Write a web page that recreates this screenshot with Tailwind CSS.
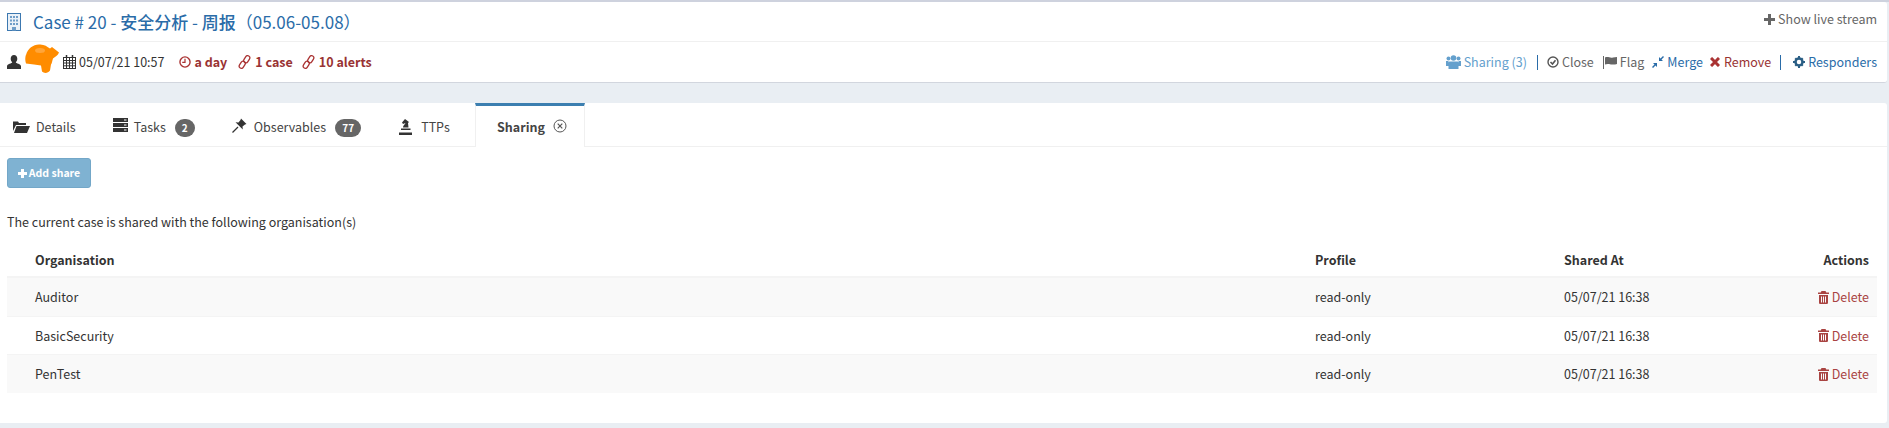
<!DOCTYPE html>
<html lang="zh">
<head>
<meta charset="utf-8">
<script src="https://cdn.jsdelivr.net/npm/@tailwindcss/browser@4"></script>
</head>
<body class="m-0 h-[428px] w-[1889px] overflow-hidden bg-[#e9eef3] font-['Noto_Sans_CJK_SC','Noto_Sans',sans-serif] text-[12.5px] leading-[20px] text-[#333]">
<div class="h-[2px] bg-[#ced2de]"></div>
<div class="w-[1887px] h-[81px] bg-white rounded-r-[3px] border-b border-[#d2d6de]">
  <div class="h-[40px] border-b border-[#f0f0f0] flex items-start justify-between pl-[7px] pr-[10px]">
    <div class="flex items-center h-[39px] text-[#2a6ca8]">
      <svg class="w-[14px] h-[18px] mr-[12px]" viewBox="0 0 14 18" fill="none"><rect x=".5" y=".5" width="13" height="17" stroke="#3c78b0" fill="#eaf1f8"/><path d="M3 3h2v2H3zM6 3h2v2H6zM9 3h2v2H9zM3 6.500h2v2H3zM6 6.500h2v2H6zM9 6.500h2v2H9zM3 10h2v2H3zM6 10h2v2H6zM9 10h2v2H9zM5 14h4v3.500H5z" fill="#6f9dc8"/></svg>
      <span class="text-[17px] leading-[24px]">Case # 20 - <span class="font-medium">安全分析</span> - <span class="font-medium">周报</span>（05.06-05.08）</span>
    </div>
    <div class="flex items-center gap-[3px] mt-[7px] text-[#666]">
      <svg class="w-[11px] h-[11px]" viewBox="0 0 11 11"><path d="M4 0h3v4h4v3H7v4H4V7H0V4h4z" fill="#666"/></svg>
      <span>Show live stream</span>
    </div>
  </div>
  <div class="h-[40px] flex items-center justify-between pl-[7px] pr-[10px]">
    <div class="flex items-center">
      <svg class="w-[14px] h-[14px]" viewBox="0 0 14 14"><path d="M7 0c2 0 3.300 1.600 3.300 3.800 0 1.400-.6 2.700-1.500 3.500 0 1.200 5.200 1.500 5.200 4V14H0v-2.700c0-2.500 5.200-2.800 5.200-4C4.300 6.500 3.700 5.200 3.700 3.800 3.700 1.600 5 0 7 0z" fill="#333"/></svg>
      <div class="relative w-[42px] h-[14px]">
        <svg class="absolute left-[4px] top-[-11px] w-[34px] h-[30px]" viewBox="0 0 34 30"><path d="M1 11C3 4 8 1 14 .5c5-.5 8 2 11 4l2-1.500 7 5.500c-1 3-4 4-6 6-1 3-1 5-2 6l-1 6c-2 3-6 3-8 1l-1-6-7-1-8-1c-1-3-1-6 0-9z" fill="#ff8c00"/><ellipse cx="15" cy="6.500" rx="5" ry="2.500" fill="#ffa53a"/></svg>
      </div>
      <svg class="w-[13px] h-[14px] mr-[3px]" viewBox="0 0 13 14" fill="none" stroke="#333"><rect x=".5" y="2.500" width="12" height="11"/><path d="M.5 5.500h12M.5 8h12M.5 10.800h12M3.500 3v10.500M6.500 3v10.500M9.500 3v10.500"/><path d="M3.500 0v3M9.500 0v3" stroke-width="1.500"/></svg>
      <span>05/07/21 10:57</span>
      <span class="flex items-center font-bold text-[#993333] ml-[15px]">
        <svg class="w-[12px] h-[12px] mr-[3px]" viewBox="0 0 13 13" fill="none" stroke="#a33"><circle cx="6.500" cy="6.500" r="5.500" stroke-width="1.500"/><path d="M6.500 3v4H3.500" stroke-width="1.300"/></svg>a day</span>
      <span class="flex items-center font-bold text-[#993333] ml-[11px]">
        <svg class="w-[13px] h-[14px] mr-[4px]" viewBox="0 0 13 14" fill="none" stroke="#a33" stroke-width="1.300"><rect x="2" y="6" width="4.500" height="7.500" rx="2.250" transform="rotate(32 4.250 9.750)"/><rect x="6.500" y=".5" width="4.500" height="7.500" rx="2.250" transform="rotate(32 8.750 4.250)"/></svg>1 case</span>
      <span class="flex items-center font-bold text-[#993333] ml-[9px]">
        <svg class="w-[13px] h-[14px] mr-[4px]" viewBox="0 0 13 14" fill="none" stroke="#a33" stroke-width="1.300"><rect x="2" y="6" width="4.500" height="7.500" rx="2.250" transform="rotate(32 4.250 9.750)"/><rect x="6.500" y=".5" width="4.500" height="7.500" rx="2.250" transform="rotate(32 8.750 4.250)"/></svg>10 alerts</span>
    </div>
    <div class="flex items-center">
      <span class="flex items-center text-[#64a0cd]">
        <svg class="w-[15px] h-[14px] mr-[3px]" viewBox="0 0 15 14" fill="#64a0cd"><circle cx="7.500" cy="3" r="2.800"/><circle cx="2.500" cy="3.500" r="2"/><circle cx="12.500" cy="3.500" r="2"/><path d="M4 6.500h7c1 0 1.500.5 1.500 1.500v6h-10V8c0-1 .5-1.500 1.500-1.500zM0 6h2.500v5H0zM12.500 6H15v5h-2.500z"/></svg>Sharing (3)</span>
      <span class="w-px h-[15px] bg-[#2a6ca8] ml-[10px] mr-[9px]"></span>
      <span class="flex items-center text-[#666]">
        <svg class="w-[12px] h-[12px] mr-[3px]" viewBox="0 0 12 12" fill="none" stroke="#555" stroke-width="1.400"><circle cx="6" cy="6" r="5"/><path d="M3.500 6 5.500 8 8.500 4.200" stroke-width="1.600"/></svg>Close</span>
      <span class="flex items-center text-[#666] ml-[9px]">
        <svg class="w-[14px] h-[13px] mr-[3px]" viewBox="0 0 14 13" fill="#666"><path d="M0 0h1v13H0zM2 1.500c3-1.500 5 1 8 0l4-.5v7c-3 1-6 .5-8 0-1.500-.3-3 0-4 .5z"/></svg>Flag</span>
      <span class="flex items-center text-[#2a6ca8] ml-[8px]">
        <svg class="w-[12px] h-[12px] mr-[3px]" viewBox="0 0 12 12" fill="#2a6ca8"><path d="M11 0l1 1-2.500 2.500L11 5H7V1l1.500 1.500zM1 12l-1-1 2.500-2.500L1 7h4v4L3.500 9.500z"/></svg>Merge</span>
      <span class="flex items-center text-[#993333] ml-[7px]">
        <svg class="w-[10px] h-[10px] mr-[4px]" viewBox="0 0 10 10" fill="none" stroke="#a33" stroke-width="3"><path d="M1 1l8 8M9 1l-8 8"/></svg>Remove</span>
      <span class="w-px h-[15px] bg-[#2a6ca8] ml-[9px] mr-[12px]"></span>
      <span class="flex items-center text-[#2a6ca8]">
        <svg class="w-[12px] h-[12px] mr-[3px]" viewBox="0 0 12 12"><circle cx="6" cy="6" r="3.500" fill="none" stroke="#2b5f85" stroke-width="2.500"/><path d="M5 0h2v2.500H5zM5 9.500h2V12H5zM0 5h2.500v2H0zM9.500 5H12v2H9.500zM1.500 3 3 1.500 4.500 3 3 4.500zM7.500 9 9 7.500 10.500 9 9 10.500zM7.500 3 9 1.500 10.500 3 9 4.500zM1.500 9 3 7.500 4.500 9 3 10.500z" fill="#2b5f85"/></svg>Responders</span>
    </div>
  </div>
</div>
<div class="w-[1887px] h-[320px] mt-[20px] bg-white rounded-r-[3px]">
  <div class="h-[44px] border-b border-[#f0f0f0] flex items-stretch text-[#444]">
    <div class="w-[475px] flex items-center pt-[4px]">
      <svg class="ml-[13px] w-[17px] h-[13px] mr-[6px]" viewBox="0 0 17 13" fill="#333"><path d="M0 1.500h5l1 1.500h7v2H3L0 11zM3.500 6H17l-3 7H1z"/></svg><span>Details</span>
      <svg class="ml-[37px] w-[15px] h-[14px] mr-[6px] mb-[3px]" viewBox="0 0 15 14" fill="#333"><path d="M0 0h15v4H0zM0 5h15v4H0zM0 10h15v4H0z"/><path d="M11 1.500h2.500v1H11zM11 6.500h2.500v1H11zM11 11.500h2.500v1H11z" fill="#fff"/></svg><span>Tasks</span>
      <span class="ml-[9px] w-[20px] h-[18px] mt-[3px] rounded-full bg-[#666] text-white text-[10px] font-bold leading-[18px] text-center">2</span>
      <svg class="ml-[37px] w-[15px] h-[15px] mr-[7px] mb-[3px]" viewBox="0 0 15 15" fill="#333"><path d="M9 .5 14.500 6 13 6.500 10.500 8.500 10.800 11.500 3.500 4.200 6.500 4.500 8.500 2z"/><path d="M.5 14.500 6 9" stroke="#333" stroke-width="1.200"/></svg><span>Observables</span>
      <span class="ml-[9px] w-[26px] h-[18px] mt-[3px] rounded-full bg-[#666] text-white text-[10px] font-bold leading-[18px] text-center">77</span>
      <svg class="ml-[37px] w-[15px] h-[16px] mr-[8px]" viewBox="0 0 15 16" fill="#333"><path d="M7 0l4 3-1 1 .5 4.500H5C5 6 7 5.500 7.500 4L5 5 4 3.500zM3 9.500h9.500V11H3zM1 13.500h13V16H1z"/></svg><span>TTPs</span>
    </div>
    <div class="w-[110px] h-[44px] bg-white border-t-[3px] border-[#3c7fb0] border-x border-x-[#f0f0f0] flex items-center pl-[21px]">
      <span class="font-bold text-[#444]">Sharing</span>
      <svg class="ml-[8px] w-[14px] h-[14px] mb-[2px]" viewBox="0 0 14 14" fill="none" stroke="#555"><circle cx="7" cy="7" r="6"/><path d="M4.700 4.700l4.600 4.600M9.300 4.700l-4.600 4.600" stroke-width="1.200"/></svg>
    </div>
  </div>
  <div class="pl-[7px] pr-[10px]">
    <button class="mt-[11px] w-[84px] h-[30px] rounded-[3px] bg-[#7fb2d2] border border-[#73a7c8] text-white text-[10.5px] font-bold flex items-center justify-center gap-[2px]">
      <svg class="w-[9px] h-[9px]" viewBox="0 0 9 9"><path d="M3 0h3v3h3v3H6v3H3V6H0V3h3z" fill="#fff"/></svg>Add share</button>
    <p class="mt-[24px] h-[20px] text-[#333]">The current case is shared with the following organisation(s)</p>
    <div class="mt-[12px] text-[#333]">
      <div class="grid grid-cols-[1280px_249px_1fr_auto] h-[34px] items-center pl-[28px] pr-[8px] font-bold border-b-2 border-[#f4f4f4]">
        <span>Organisation</span><span>Profile</span><span>Shared At</span><span>Actions</span>
      </div>
      <div class="grid grid-cols-[1280px_249px_1fr_auto] h-[39px] items-center pl-[28px] pr-[8px] bg-[#f9f9f9] border-b border-[#f4f4f4]">
        <span>Auditor</span><span>read-only</span><span>05/07/21 16:38</span>
        <span class="flex items-center text-[#a94442]"><svg class="w-[11px] h-[13px] mr-[3px]" viewBox="0 0 11 13" fill="#a94442"><path d="M3.500 0h4l.8 1.500H11v1.500H0V1.500h2.700zM1 4h9v7.500c0 1-.6 1.500-1.500 1.500h-6C1.600 13 1 12.500 1 11.500zM3 5.500v6h1v-6zM5 5.500v6h1v-6zM7 5.500v6h1v-6z" fill-rule="evenodd"/></svg>Delete</span>
      </div>
      <div class="grid grid-cols-[1280px_249px_1fr_auto] h-[38px] items-center pl-[28px] pr-[8px] border-b border-[#f4f4f4]">
        <span>BasicSecurity</span><span>read-only</span><span>05/07/21 16:38</span>
        <span class="flex items-center text-[#a94442]"><svg class="w-[11px] h-[13px] mr-[3px]" viewBox="0 0 11 13" fill="#a94442"><path d="M3.500 0h4l.8 1.500H11v1.500H0V1.500h2.700zM1 4h9v7.500c0 1-.6 1.500-1.500 1.500h-6C1.600 13 1 12.500 1 11.500zM3 5.500v6h1v-6zM5 5.500v6h1v-6zM7 5.500v6h1v-6z" fill-rule="evenodd"/></svg>Delete</span>
      </div>
      <div class="grid grid-cols-[1280px_249px_1fr_auto] h-[38px] items-center pl-[28px] pr-[8px] bg-[#f9f9f9]">
        <span>PenTest</span><span>read-only</span><span>05/07/21 16:38</span>
        <span class="flex items-center text-[#a94442]"><svg class="w-[11px] h-[13px] mr-[3px]" viewBox="0 0 11 13" fill="#a94442"><path d="M3.500 0h4l.8 1.500H11v1.500H0V1.500h2.700zM1 4h9v7.500c0 1-.6 1.500-1.500 1.500h-6C1.600 13 1 12.500 1 11.500zM3 5.500v6h1v-6zM5 5.500v6h1v-6zM7 5.500v6h1v-6z" fill-rule="evenodd"/></svg>Delete</span>
      </div>
    </div>
  </div>
</div>
</body>
</html>
